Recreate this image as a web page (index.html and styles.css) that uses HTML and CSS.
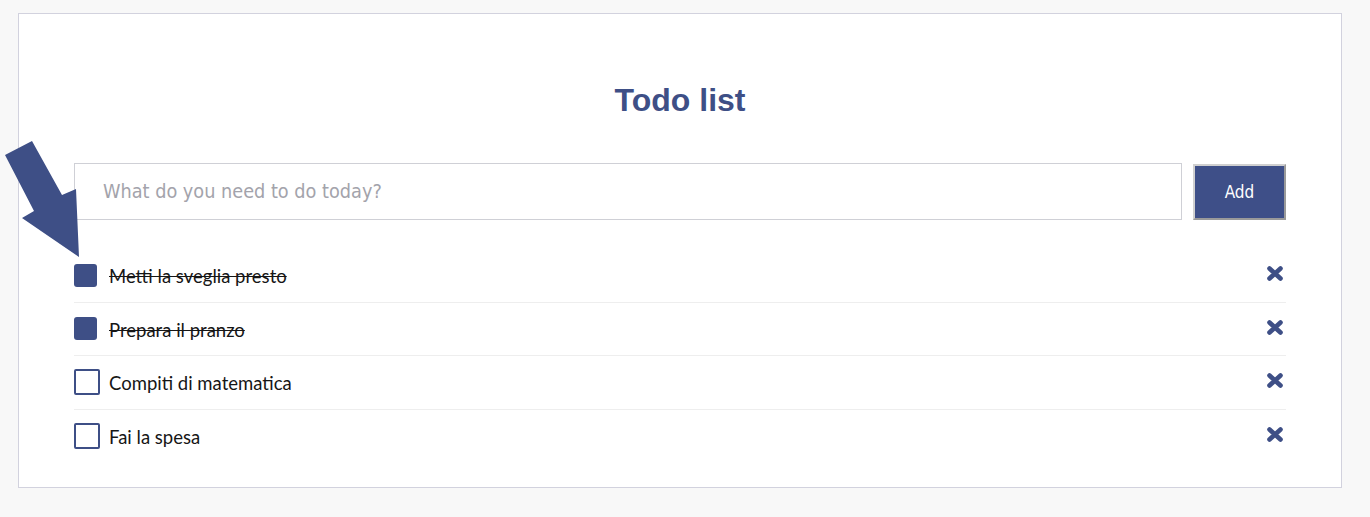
FILE: index.html
```html
<!DOCTYPE html>
<html>
<head>
<meta charset="utf-8">
<link rel="stylesheet" href="styles.css">
</head>
<body>
<div class="card">
  <h1 class="title">Todo list</h1>
  <div class="form">
    <input class="field" type="text" placeholder="What do you need to do today?">
    <button class="add">Add</button>
  </div>
  <ul class="list">
    <li class="item done">
      <span class="check"></span>
      <span class="label">Metti la sveglia presto</span>
      <svg class="del" viewBox="0 0 18 15" width="18" height="15"><path d="M3.5 2.5 L14.5 12.5 M14.5 2.5 L3.5 12.5" /></svg>
    </li>
    <li class="item done">
      <span class="check"></span>
      <span class="label">Prepara il pranzo</span>
      <svg class="del" viewBox="0 0 18 15" width="18" height="15"><path d="M3.5 2.5 L14.5 12.5 M14.5 2.5 L3.5 12.5" /></svg>
    </li>
    <li class="item">
      <span class="check"></span>
      <span class="label">Compiti di matematica</span>
      <svg class="del" viewBox="0 0 18 15" width="18" height="15"><path d="M3.5 2.5 L14.5 12.5 M14.5 2.5 L3.5 12.5" /></svg>
    </li>
    <li class="item">
      <span class="check"></span>
      <span class="label">Fai la spesa</span>
      <svg class="del" viewBox="0 0 18 15" width="18" height="15"><path d="M3.5 2.5 L14.5 12.5 M14.5 2.5 L3.5 12.5" /></svg>
    </li>
  </ul>
  <svg class="arrow" viewBox="0 0 90 270" width="90" height="270"><polygon points="5,155 32,141 62,195 76,189 79,257 22,218 34,211" /></svg>
</div>
</body>
</html>
```
FILE: styles.css
```css
html, body {
  margin: 0;
  padding: 0;
  background: #f8f8f8;
}
body {
  padding: 13px 28px 0 18px;
  height: 517px;
  box-sizing: border-box;
}
.card {
  background: #fff;
  border: 1px solid #d2d2de;
  padding: 68px 55px 25px 55px;
}
.title {
  margin: 0;
  text-align: center;
  font-family: "Liberation Sans", Arial, sans-serif;
  font-weight: bold;
  font-size: 32px;
  line-height: 37px;
  color: #3e4f86;
}
.form {
  display: flex;
  gap: 11px;
  margin-top: 44px;
  align-items: flex-start;
}
.field {
  flex: 1;
  height: 57px;
  box-sizing: border-box;
  border: 1px solid #cfd0d6;
  border-radius: 0;
  padding: 0 0 0 28px;
  font-family: "DejaVu Sans Condensed", "DejaVu Sans", sans-serif;
  font-size: 19.7px;
  color: #333;
  outline: none;
}
.field::placeholder {
  color: #a3a3ab;
}
.add {
  width: 93px;
  height: 56px;
  margin-top: 1px;
  box-sizing: border-box;
  background: #3e4f88;
  color: #fff;
  border: 2px solid #9a9a9a;
  border-top-color: #d0d0d0;
  border-left-color: #d0d0d0;
  font-family: "DejaVu Sans Condensed", "DejaVu Sans", sans-serif;
  font-size: 17px;
  padding: 0;
}
.list {
  list-style: none;
  margin: 29px 0 0 0;
  padding: 0;
}
.item {
  display: flex;
  align-items: center;
  height: 52.6px;
  border-bottom: 1px solid #eeeeee;
  font-family: "Lato", "Noto Sans", sans-serif;
  font-size: 18.5px;
  color: #161616;
}
.item:last-child {
  border-bottom: none;
}
.check {
  width: 22px;
  height: 22px;
  border: 2px solid #3e4f86;
  border-radius: 2px;
  box-sizing: content-box;
  flex: none;
}
.done .check {
  width: 23px;
  height: 23px;
  border: none;
  background: #3e4f86;
  border-radius: 3px;
  margin-right: 3px;
}
.label {
  margin-left: 9px;
  padding-top: 2px;
  flex: 1;
}
.done .label {
  text-decoration: line-through;
}
.del {
  flex: none;
  margin-right: 2px;
  margin-top: -3px;
}
.del path {
  stroke: #3e4f86;
  stroke-width: 4.6;
  stroke-linecap: round;
  fill: none;
}
.arrow {
  position: absolute;
  left: 0;
  top: 0;
}
.arrow polygon {
  fill: #3e4f86;
}
```
